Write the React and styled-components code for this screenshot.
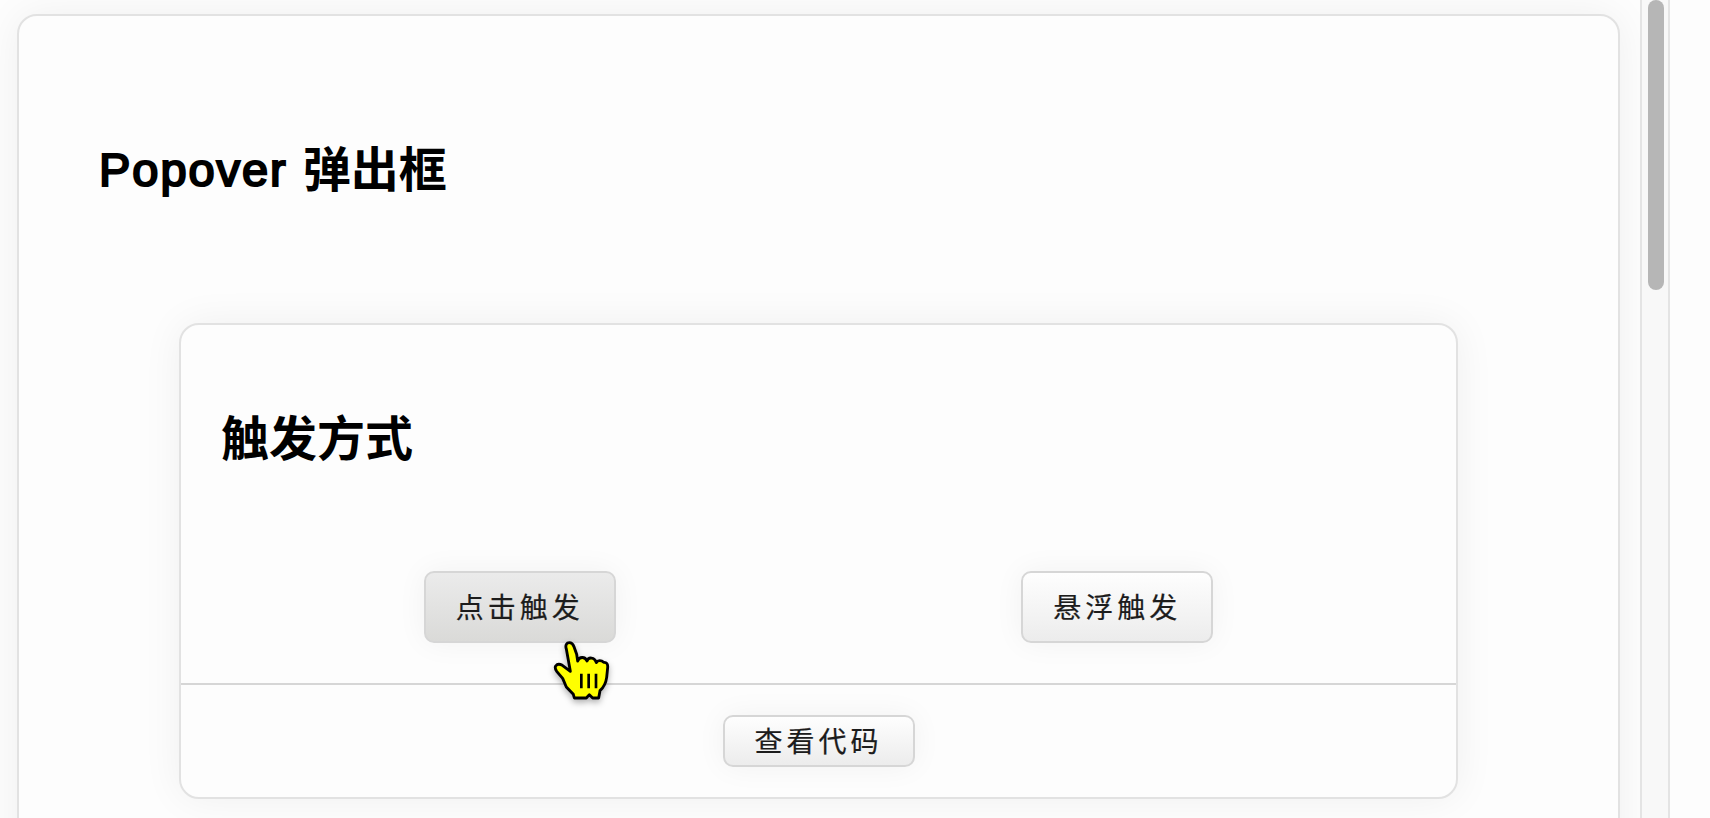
import React from 'react';
import styled, {createGlobalStyle, css} from 'styled-components';

const GlobalStyle = createGlobalStyle`
    * {
        box-sizing: border-box;
    }

    body {
        margin: 0;
        background-color: #fdfdfd;
        color: #000;
        font-family: 'Liberation Sans', 'Noto Sans CJK SC', sans-serif;
        overflow: hidden;
    }
`;

const card = css`
    border: 2px solid #e2e2e2;
    border-radius: 20px;
    background-color: #fdfdfd;
    box-shadow: 0 0 40px rgba(0, 0, 0, 0.06);
`;

const Layout = styled.div`
    display: flex;
    height: 818px;
    overflow: hidden;
`;

const Content = styled.main`
    width: 1640px;
    padding: 14px 20px 0 17px;
    overflow: hidden;
`;

const Page = styled.section`
    ${card}
    height: 1400px;
    padding: 120px 160px 0;
`;

const PageTitle = styled.h1`
    display: flex;
    align-items: center;
    height: 70px;
    margin: 0 0 117px -80px;
    font-size: 48px;
    line-height: 70px;
    font-weight: 700;
`;

const Latin = styled.span`
    margin-right: 15px;
    padding-bottom: 2px;
    font-size: 47px;
    font-weight: 400;
    letter-spacing: 1.95px;
    -webkit-text-stroke: 2.2px #000;
`;

const Demo = styled.div`
    ${card}
    height: 476px;
`;

const DemoTitle = styled.h2`
    margin: 0;
    padding: 80px 40px 0;
    height: 246px;
    font-size: 48px;
    line-height: 70px;
    font-weight: 700;
`;

const Triggers = styled.div`
    display: flex;
    justify-content: space-around;
    height: 114px;
    padding: 0 40px;
    border-bottom: 2px solid #d6d6d6;
`;

const Footer = styled.div`
    display: flex;
    justify-content: center;
    padding-top: 30px;
`;

const Button = styled.button`
    width: 192px;
    height: ${props => props.$small ? '52px' : '72px'};
    padding: 0 0 2px 30px;
    border: 2px solid #d6d6d6;
    border-radius: 10px;
    background: ${props => props.$active
        ? 'linear-gradient(#ebebeb, #dadad8)'
        : 'linear-gradient(#fefefe, #ececec)'};
    box-shadow: 0 0 30px rgba(0, 0, 0, 0.05);
    color: #1c1c1c;
    font-family: 'Noto Sans CJK SC', sans-serif;
    font-size: 28px;
    line-height: 40px;
    letter-spacing: 4px;
    text-align: left;
    white-space: nowrap;
    -webkit-text-stroke: 0.2px #1c1c1c;
    cursor: pointer;
`;

const ScrollTrack = styled.div`
    width: 30px;
    padding-left: 6px;
    border: solid #e4e4e4;
    border-width: 0 2px;
    background-color: #f8f8f8;
`;

const ScrollThumb = styled.div`
    width: 16px;
    height: 290px;
    border-radius: 8px;
    background-color: #b6b6b6;
`;

const Pointer = styled.svg`
    position: absolute;
    left: 545px;
    top: 635px;
    filter: drop-shadow(0 3px 3px rgba(0, 0, 0, 0.3));
    pointer-events: none;
`;

const HandCursor = () => (
    <Pointer width="70" height="70" viewBox="0 0 210 210">
        <path
            d="M64 42C60 30 65 23 73 23C80 23 84 27 87 35L95 58L98 78C102 65 120 63 126 78C130 65 149 66 154 83C158 75 169 75 176 82C185 81 189 87 188 98L185 127C183 142 176 157 165 167L161 189L143 189L133 179L124 189L88 189L85 178L64 156L53 130L35 109C31 103 29 98 32 93C37 86 45 87 52 91L76 109Z"
            fill="#ffff00"
            stroke="#000"
            strokeWidth="8.5"
            strokeLinejoin="round"
        />
        <path d="M109 116V160M131 116V160M153 116V160" fill="none" stroke="#000" strokeWidth="8"/>
    </Pointer>
);

const App = () => (
    <>
        <GlobalStyle/>
        <Layout>
            <Content>
                <Page>
                    <PageTitle><Latin>Popover</Latin>弹出框</PageTitle>
                    <Demo>
                        <DemoTitle>触发方式</DemoTitle>
                        <Triggers>
                            <Button $active>点击触发</Button>
                            <Button>悬浮触发</Button>
                        </Triggers>
                        <Footer>
                            <Button $small>查看代码</Button>
                        </Footer>
                    </Demo>
                </Page>
            </Content>
            <ScrollTrack>
                <ScrollThumb/>
            </ScrollTrack>
        </Layout>
        <HandCursor/>
    </>
);

export default App;
